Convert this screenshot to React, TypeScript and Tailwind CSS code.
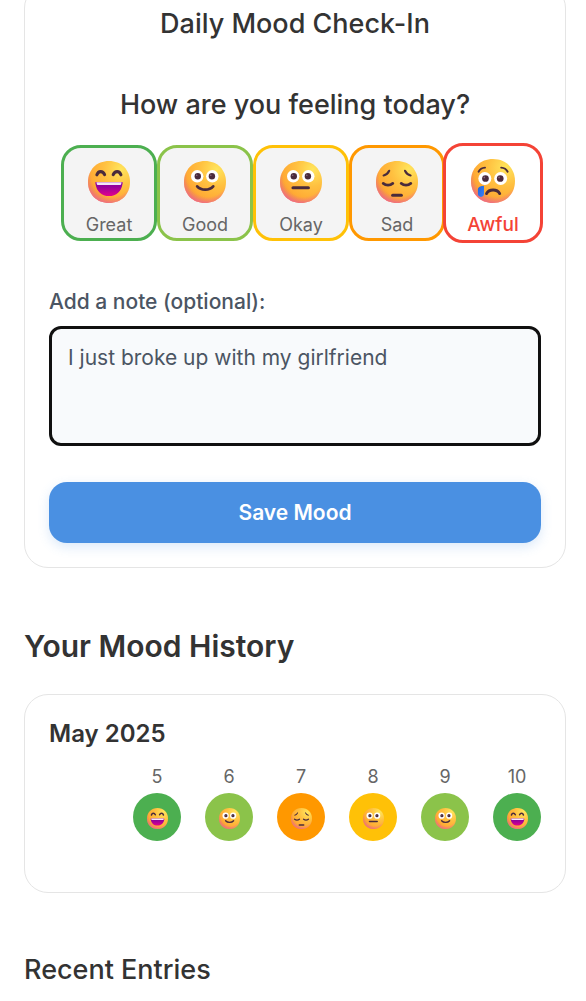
import { useId, useState } from 'react';
import clsx from 'clsx';

type Mood = 'great' | 'good' | 'okay' | 'sad' | 'awful';

const MOODS: { id: Mood; label: string; border: string; text: string; fill: string }[] = [
  { id: 'great', label: 'Great', border: 'border-[#4caf50]', text: 'text-[#4caf50]', fill: 'bg-[#4caf50]' },
  { id: 'good', label: 'Good', border: 'border-[#8bc34a]', text: 'text-[#8bc34a]', fill: 'bg-[#8bc34a]' },
  { id: 'okay', label: 'Okay', border: 'border-[#ffc107]', text: 'text-[#ffc107]', fill: 'bg-[#ffc107]' },
  { id: 'sad', label: 'Sad', border: 'border-[#ff9800]', text: 'text-[#ff9800]', fill: 'bg-[#ff9800]' },
  { id: 'awful', label: 'Awful', border: 'border-[#f44336]', text: 'text-[#f44336]', fill: 'bg-[#f44336]' },
];

const HISTORY: { day: number; mood: Mood }[] = [
  { day: 5, mood: 'great' },
  { day: 6, mood: 'good' },
  { day: 7, mood: 'sad' },
  { day: 8, mood: 'okay' },
  { day: 9, mood: 'good' },
  { day: 10, mood: 'great' },
];

const INK = '#4a2b3c';
const HEAD = 'M21 0C33.2 0 42 8.6 42 21S33.2 42 21 42 0 33.4 0 21 8.8 0 21 0Z';

function OpenEyes({ y }: { y: number }) {
  return (
    <>
      <circle cx="13.2" cy={y} r="6.2" fill="#fff" />
      <circle cx="28.3" cy={y} r="6.2" fill="#fff" />
      <circle cx="13.8" cy={y} r="3.2" fill={INK} />
      <circle cx="27.9" cy={y} r="3.2" fill={INK} />
      <circle cx="12.7" cy={y - 1} r="0.8" fill="#8a6a80" />
      <circle cx="26.8" cy={y - 1} r="0.8" fill="#8a6a80" />
    </>
  );
}

function Face({ mood, className }: { mood: Mood; className?: string }) {
  const id = useId();
  const stroke = { fill: 'none', stroke: INK, strokeWidth: 2.8, strokeLinecap: 'round' as const };

  return (
    <svg viewBox="0 0 42 42" className={clsx('shrink-0', className)} aria-hidden="true">
      <defs>
        <radialGradient id={`${id}base`} cx="0.78" cy="0.2" r="0.9">
          <stop offset="0" stopColor="#ffe55c" />
          <stop offset="0.45" stopColor="#ffc040" />
          <stop offset="0.8" stopColor="#ffab35" />
          <stop offset="1" stopColor="#f28f3c" />
        </radialGradient>
        <radialGradient id={`${id}pink`} cx="0.56" cy="0.36" r="0.68">
          <stop offset="0.72" stopColor="#f0708c" stopOpacity="0" />
          <stop offset="1" stopColor="#ee609a" stopOpacity="0.9" />
        </radialGradient>
        <linearGradient id={`${id}mouth`} x1="0" y1="0" x2="0" y2="1">
          <stop offset="0.3" stopColor="#93009c" />
          <stop offset="1" stopColor="#e3008c" />
        </linearGradient>
        <linearGradient id={`${id}tear`} x1="0" y1="0" x2="1" y2="1">
          <stop offset="0" stopColor="#1b62e0" />
          <stop offset="1" stopColor="#3d82f5" />
        </linearGradient>
      </defs>
      <path d={HEAD} fill={`url(#${id}base)`} />
      <path d={HEAD} fill={`url(#${id}pink)`} />

      {mood === 'great' && (
        <>
          <path d="M8.9 13.8C10.4 9.6 14.8 9.6 16.6 13.6M25.2 13.6C27 9.6 31.4 9.6 32.9 13.8" {...stroke} strokeWidth={3.1} />
          <path d="M8.4 21H33.6C34.4 21 34.8 21.5 34.6 22.4 33.4 30.5 28.4 35 21 35S8.6 30.5 7.4 22.4C7.2 21.5 7.6 21 8.4 21Z" fill={`url(#${id}mouth)`} />
          <path d="M8.4 21.2H33.6L33.2 23C33 23.8 32.6 24 32 24H10C9.4 24 9 23.8 8.8 23Z" fill="#f3e6f7" />
        </>
      )}
      {mood === 'good' && (
        <>
          <OpenEyes y={15.3} />
          <path d="M13.2 25.4C17 29.8 25.4 29.8 29.2 25.4" {...stroke} />
        </>
      )}
      {mood === 'okay' && (
        <>
          <OpenEyes y={15.3} />
          <path d="M13 26.8H28.4" {...stroke} strokeWidth={3.1} />
        </>
      )}
      {mood === 'sad' && (
        <>
          <path d="M13.2 9.8C12.2 12 10.2 13.8 7.6 14.4M29 9.8C30 12 32 13.8 34.6 14.4" {...stroke} strokeWidth={2.1} />
          <path d="M7.2 22.4C10 24.6 14 24.6 16.8 22.4M25.2 22.4C28 24.6 32 24.6 34.8 22.4" {...stroke} />
          <path d="M16.6 34.2H25.4" {...stroke} strokeWidth={3} />
        </>
      )}
      {mood === 'awful' && (
        <>
          <path d="M7.2 12.2C8.4 9.8 10.6 8.4 13.4 8.2M28.8 8.2C31.6 8.4 33.8 9.8 35 12.2" {...stroke} strokeWidth={1.8} />
          <OpenEyes y={18.6} />
          <path d="M14.8 33C17.2 28.4 25 28.4 27.4 33" {...stroke} />
          <path d="M12.4 25.6V33C12.4 35 11.2 36.2 9.5 36.2S6.6 35 6.6 33V29C6.6 27 9 25.8 12.4 25.6Z" fill={`url(#${id}tear)`} />
        </>
      )}
    </svg>
  );
}

export default function App() {
  const [selected, setSelected] = useState<Mood>('awful');
  const [note, setNote] = useState('I just broke up with my girlfriend');

  return (
    <div className="overflow-hidden bg-white font-['Inter',sans-serif] text-[#333333]">
      <main className="-mt-4 pb-4 pl-6 pr-5">
        <section className="rounded-3xl border border-[#e5e5e5] p-6">
          <h1 className="text-center text-[27px] font-medium leading-[30px]">Daily Mood Check-In</h1>
          <h2 className="mt-[50px] text-center text-[27px] font-medium leading-8">How are you feeling today?</h2>

          <div className="mt-6 grid grid-cols-5 pl-3">
            {MOODS.map((mood) => {
              const active = mood.id === selected;
              return (
                <button
                  key={mood.id}
                  type="button"
                  aria-pressed={active}
                  onClick={() => setSelected(mood.id)}
                  className={clsx(
                    'flex flex-col items-center gap-2.5 rounded-[20px] border-3 leading-6',
                    mood.border,
                    active
                      ? ['-m-0.5 h-25 bg-white pt-[13px] text-[19px] font-medium', mood.text]
                      : 'h-24 bg-[#f4f4f4] pt-[13px] text-[18px] text-[#666666]',
                  )}
                >
                  <Face mood={mood.id} className={active ? 'size-11' : 'size-[42px]'} />
                  <span>{mood.label}</span>
                </button>
              );
            })}
          </div>

          <label htmlFor="note" className="mt-[45px] block text-[21px] font-medium leading-8 text-[#4b5563]">
            Add a note (optional):
          </label>
          <textarea
            id="note"
            value={note}
            onChange={(e) => setNote(e.target.value)}
            className="mt-2 block h-30 w-full resize-none rounded-xl border-3 border-[#101010] bg-[#f8fafc] px-4 py-3.5 text-[21px] leading-[30px] text-[#4b5563] outline-none"
          />

          <button
            type="button"
            className="mt-9 block h-[61px] w-full rounded-[18px] bg-[#4a90e2] text-[21px] font-semibold text-white shadow-[0_4px_12px_rgba(74,144,226,0.2)]"
          >
            Save Mood
          </button>
        </section>

        <h2 className="mt-15 text-[30px] font-semibold leading-9">Your Mood History</h2>

        <section className="mt-[30px] rounded-3xl border border-[#e5e5e5] px-6 pb-[51px] pt-6">
          <h3 className="text-2xl font-semibold leading-[30px]">May 2025</h3>
          <div className="mt-4 grid grid-cols-7 gap-6 pl-3">
            <div />
            {HISTORY.map(({ day, mood }) => (
              <div key={day} className="flex flex-col items-center gap-1">
                <span className="text-[18px] leading-6 text-[#666666]">{day}</span>
                <span
                  className={clsx(
                    'flex size-12 items-center justify-center rounded-full pt-0.5',
                    MOODS.find((m) => m.id === mood)?.fill,
                  )}
                >
                  <Face mood={mood} className="size-[21px]" />
                </span>
              </div>
            ))}
          </div>
        </section>

        <h2 className="mt-15 text-[27px] font-medium leading-[34px]">Recent Entries</h2>
      </main>
    </div>
  );
}
